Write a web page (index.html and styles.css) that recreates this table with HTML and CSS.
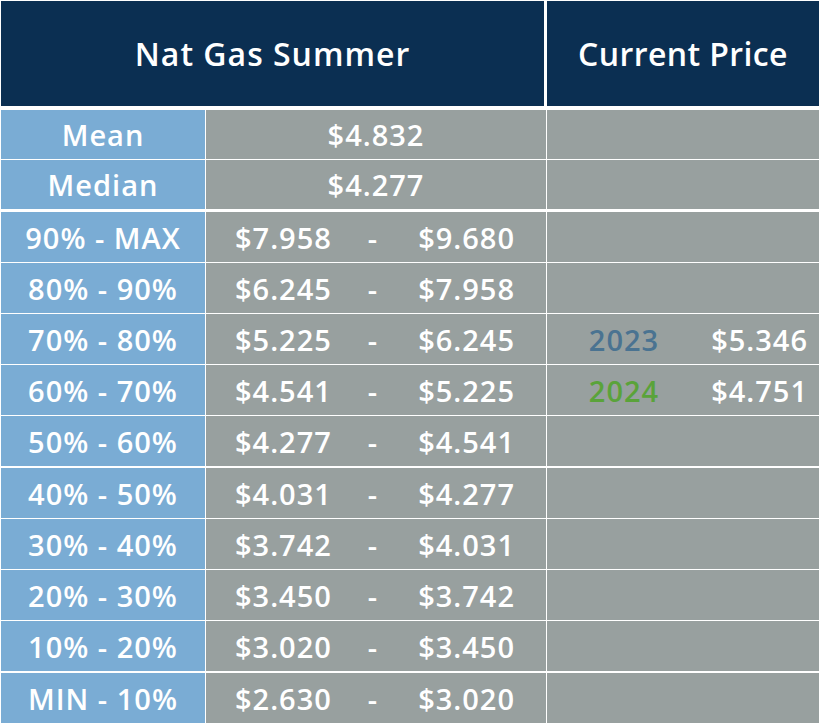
FILE: index.html
```html
<!DOCTYPE html>
<html>
<head>
<meta charset="utf-8">
<link rel="stylesheet" href="styles.css">
</head>
<body>
<div class="table">
  <div class="head">
    <div class="hcell hleft">Nat Gas Summer</div>
    <div class="hcell hright">Current Price</div>
  </div>
  <div class="body">
    <div class="row stat first"><div class="label">Mean</div><div class="mid center">$4.832</div><div class="cur"></div></div>
    <div class="row stat"><div class="label">Median</div><div class="mid center">$4.277</div><div class="cur"></div></div>
    <div class="row sep"><div class="label">90% - MAX</div><div class="mid range"><span class="lo">$7.958</span><span class="dash">-</span><span class="hi">$9.680</span></div><div class="cur"></div></div>
    <div class="row"><div class="label">80% - 90%</div><div class="mid range"><span class="lo">$6.245</span><span class="dash">-</span><span class="hi">$7.958</span></div><div class="cur"></div></div>
    <div class="row"><div class="label">70% - 80%</div><div class="mid range"><span class="lo">$5.225</span><span class="dash">-</span><span class="hi">$6.245</span></div><div class="cur"><span class="year y2023">2023</span><span class="price">$5.346</span></div></div>
    <div class="row"><div class="label">60% - 70%</div><div class="mid range"><span class="lo">$4.541</span><span class="dash">-</span><span class="hi">$5.225</span></div><div class="cur"><span class="year y2024">2024</span><span class="price">$4.751</span></div></div>
    <div class="row"><div class="label">50% - 60%</div><div class="mid range"><span class="lo">$4.277</span><span class="dash">-</span><span class="hi">$4.541</span></div><div class="cur"></div></div>
    <div class="row thick"><div class="label">40% - 50%</div><div class="mid range"><span class="lo">$4.031</span><span class="dash">-</span><span class="hi">$4.277</span></div><div class="cur"></div></div>
    <div class="row"><div class="label">30% - 40%</div><div class="mid range"><span class="lo">$3.742</span><span class="dash">-</span><span class="hi">$4.031</span></div><div class="cur"></div></div>
    <div class="row"><div class="label">20% - 30%</div><div class="mid range"><span class="lo">$3.450</span><span class="dash">-</span><span class="hi">$3.742</span></div><div class="cur"></div></div>
    <div class="row"><div class="label">10% - 20%</div><div class="mid range"><span class="lo">$3.020</span><span class="dash">-</span><span class="hi">$3.450</span></div><div class="cur"></div></div>
    <div class="row thick"><div class="label">MIN - 10%</div><div class="mid range"><span class="lo">$2.630</span><span class="dash">-</span><span class="hi">$3.020</span></div><div class="cur"></div></div>
  </div>
</div>
</body>
</html>
```
FILE: styles.css
```css
html, body {
  margin: 0;
  padding: 0;
  background: #ffffff;
}
body {
  font-family: "Open Sans", "Liberation Sans", sans-serif;
  font-weight: 600;
  color: #ffffff;
}
.table {
  width: 820px;
  height: 724px;
  padding: 1px 1px 0 1px;
  box-sizing: border-box;
  overflow: hidden;
}
.head {
  display: flex;
  gap: 3px;
  height: 105px;
}
.hcell {
  background: #0b2f52;
  display: flex;
  align-items: center;
  justify-content: center;
  font-size: 32px;
  font-weight: 600;
}
.hleft { width: 543px; letter-spacing: 1px; }
.hright { flex: 1; letter-spacing: 0.4px; }
.body {
  display: flex;
  flex-direction: column;
  margin-top: 4px;
}
.row {
  display: grid;
  grid-template-columns: 204px 340px 272px;
  column-gap: 1px;
  height: 50px;
  margin-top: 1px;
  font-size: 29px;
  letter-spacing: 1px;
  line-height: 1;
}
.row.stat { height: 49px; }
.row.first { margin-top: 0; }
.row.sep { margin-top: 3px; }
.row.thick { margin-top: 2px; }
.label {
  background: #7aacd4;
  display: flex;
  align-items: center;
  justify-content: center;
}
.mid, .cur {
  background: #98a09f;
  display: flex;
  align-items: center;
}
.center { justify-content: center; }
.range {
  display: grid;
  grid-template-columns: 100px 76px 104px;
  padding-left: 29px;
}
.lo { text-align: left; }
.dash { text-align: center; }
.hi { text-align: right; }
.cur {
  display: grid;
  grid-template-columns: 154px 107px;
}
.year { text-align: center; }
.price { text-align: right; }
.y2023 { color: #4a7391; }
.y2024 { color: #5aa33a; }
```
